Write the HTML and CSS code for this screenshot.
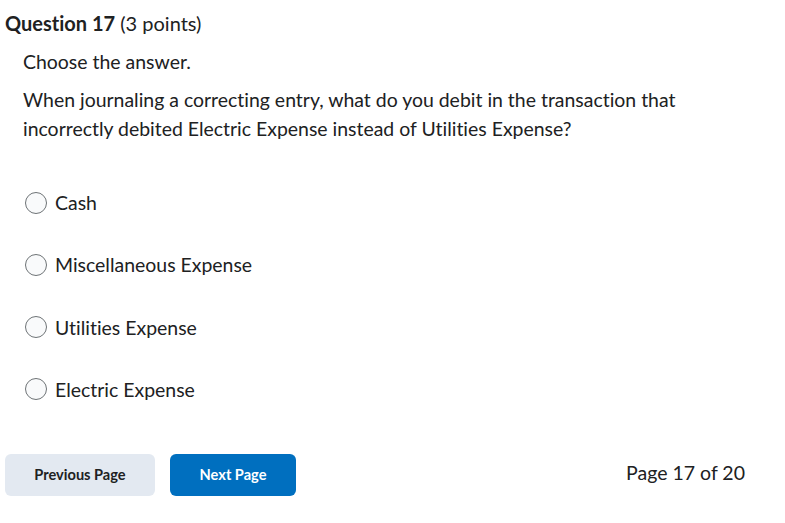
FILE: index.html
```html
<!DOCTYPE html>
<html lang="en">

<head>
    <meta charset="UTF-8">
    <meta name="viewport" content="width=device-width, initial-scale=1.0">
    <title>Quiz - Question 17</title>
    <link rel="stylesheet" href="styles.css">
</head>

<body>
    <div class="question">
        <h2 class="question-title"><strong>Question 17</strong> (3 points)</h2>
        <div class="question-body">
            <p class="prompt">Choose the answer.</p>
            <p class="stem">When journaling a correcting entry, what do you debit in the transaction that incorrectly debited Electric Expense instead of Utilities Expense?</p>
            <ul class="choices">
                <li class="choice"><span class="radio"></span>Cash</li>
                <li class="choice"><span class="radio"></span>Miscellaneous Expense</li>
                <li class="choice"><span class="radio"></span>Utilities Expense</li>
                <li class="choice"><span class="radio"></span>Electric Expense</li>
            </ul>
        </div>
    </div>
    <div class="pager">
        <button class="btn btn-secondary">Previous Page</button>
        <button class="btn btn-primary">Next Page</button>
        <span class="page-count">Page 17 of 20</span>
    </div>
</body>

</html>
```

FILE: styles.css
```css
body {
    font-family: Lato, "Open Sans", sans-serif;
    font-variant-ligatures: none;
    color: #202122;
    background-color: #fff;
    margin: 0;
    padding: 11px 40px 0 5px;
}

.question-title {
    font-size: 20px;
    font-weight: normal;
    margin: 0;
    line-height: 24px;
}

.question-title strong {
    font-weight: bold;
}

.question-body {
    padding-left: 18px;
    font-size: 19.45px;
    line-height: 29px;
}

.prompt {
    margin: 12px 0 0;
}

.stem {
    margin: 9px 0 0;
}

.choices {
    list-style: none;
    margin: 45px 0 0;
    padding: 0;
}

.choice {
    display: flex;
    align-items: center;
    height: 29px;
    margin-bottom: 33.3px;
}

.choice:last-child {
    margin-bottom: 0;
}

.radio {
    width: 20px;
    height: 20px;
    border: 1px solid #6e7376;
    border-radius: 50%;
    background-color: #f9fafb;
    margin: 0 8px 0 2px;
}

.pager {
    display: flex;
    align-items: center;
    margin-top: 50px;
}

.btn {
    font-family: Lato, sans-serif;
    font-variant-ligatures: none;
    font-size: 14.6px;
    font-weight: bold;
    height: 42px;
    border: none;
    border-radius: 6px;
    padding: 0;
}

.btn-secondary {
    background-color: #e3e9f1;
    color: #202122;
    width: 150px;
}

.btn-primary {
    background-color: #006fbf;
    color: #fff;
    margin-left: 15px;
    width: 126px;
}

.page-count {
    margin-left: auto;
    font-size: 19.5px;
    margin-top: -4px;
}
```
